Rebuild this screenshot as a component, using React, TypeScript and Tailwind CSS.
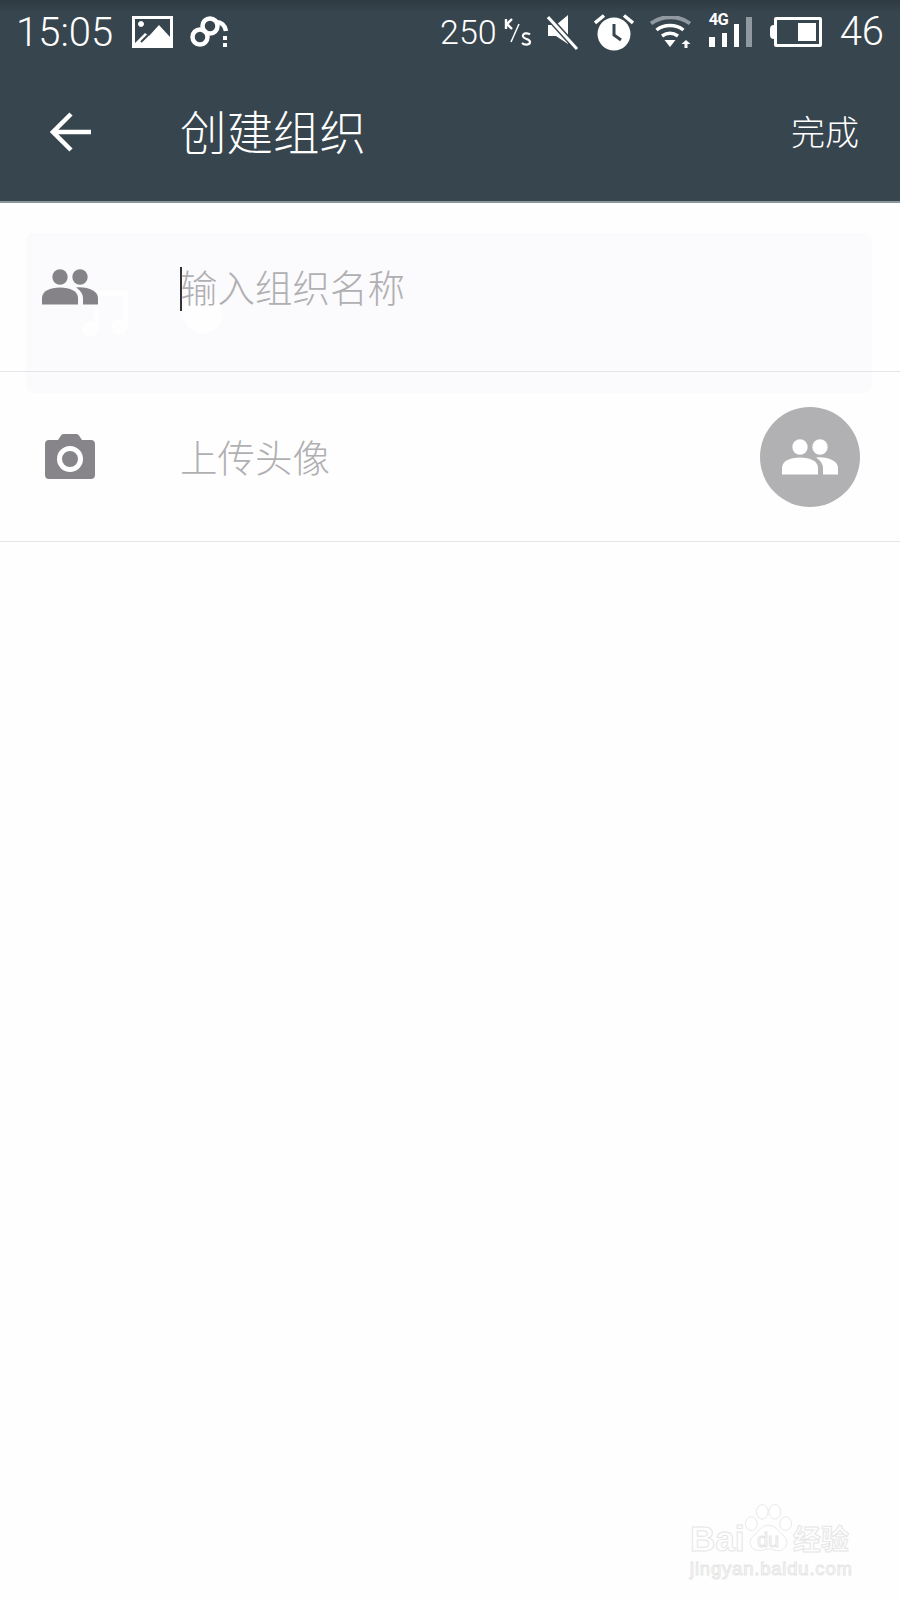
const cjk = "font-['Noto_Sans_CJK_SC','Noto_Sans',sans-serif]";

function People() {
  return (
    <svg width="56" height="36" viewBox="0 0 56 36" fill="currentColor">
      <circle cx="18" cy="8" r="7.7" />
      <circle cx="38" cy="8" r="7.7" />
      <path d="M0 35.5V29C0 22 8 18.5 18 18.5S36 22 36 29V35.5Z" />
      <path d="M34 18.5C46 17.5 56 22 56 29V35.5H41V29C41 25 38 21 34 18.5Z" />
    </svg>
  );
}

function Camera() {
  return (
    <svg width="50" height="46" viewBox="0 0 50 46">
      <path
        d="M4 6H13L16 1.5C16.500 0.800 17.300 0 18.500 0H31.500C32.700 0 33.500 0.800 34 1.500L37 6H46C48.500 6 50 7.500 50 10V41C50 43.500 48.500 45 46 45H4C1.500 45 0 43.500 0 41V10C0 7.500 1.500 6 4 6Z"
        fill="#878589"
      />
      <circle cx="25" cy="25" r="10.500" fill="none" stroke="#fff" strokeWidth="5" />
    </svg>
  );
}

function StatusIcons() {
  return (
    <div className="flex items-center">
      <span className="text-[34px] font-light font-['Roboto',sans-serif] text-white leading-none">250</span>
      <svg className="ml-[7px]" width="28" height="28" viewBox="0 0 28 28" fill="none" stroke="#fff">
        <path d="M2 1V11M8 1L3 6L8 11" strokeWidth="2.400" />
        <path d="M15 6L7 24" strokeWidth="1.500" />
        <path d="M26 16.500C24 14.500 18 15 19 18.500C20 21.500 26 20.500 26 24C26 27.500 20 27 18 25" strokeWidth="2.200" />
      </svg>
      <svg className="ml-[15px]" width="32" height="36" viewBox="0 0 32 36" fill="#fff">
        <path d="M1 11H9L21 1V30L9 22H1Z" />
        <path d="M1 3L30 35" stroke="#37454e" strokeWidth="6" />
        <path d="M1 3L30 35" stroke="#fff" strokeWidth="3" />
      </svg>
      <svg className="ml-[15px]" width="40" height="38" viewBox="0 0 40 38">
        <circle cx="20" cy="21" r="16.500" fill="#fff" />
        <path d="M20 11V22L27 27" stroke="#37454e" strokeWidth="3" fill="none" />
        <path d="M1 10L10 2.500M39 10L30 2.500" stroke="#fff" strokeWidth="3.500" />
      </svg>
      <svg className="ml-[16px]" width="42" height="32" viewBox="0 0 42 32" fill="none">
        <path d="M1 7.500C12 -1 29 -1 40 7.500" stroke="#8f999f" strokeWidth="4" />
        <path d="M6.500 14C14 8 26 8 33.500 14" stroke="#fff" strokeWidth="3.500" />
        <path d="M12 20C17 16.500 23 16.500 28 20" stroke="#fff" strokeWidth="3.500" />
        <path d="M14.500 24H25.500L20 31Z" fill="#fff" />
        <path d="M36 24L40.500 28H37.500V32H34.500V28H31.500Z" fill="#fff" />
      </svg>
      <div className="ml-[17px] relative w-[44px] h-[32px] flex items-end gap-[7px] mb-[2px]">
        <span className="absolute left-0 top-[-3px] text-[16.500px] leading-none font-bold font-['Roboto',sans-serif] text-white tracking-[-0.5px]">4G</span>
        <span className="w-[6px] h-[10px] bg-white" />
        <span className="w-[5px] h-[14px] bg-white" />
        <span className="w-[5px] h-[23px] bg-white" />
        <span className="w-[6px] h-[30px] bg-[#8f999f]" />
      </div>
      <div className="ml-[17px] flex items-center">
        <span className="w-[4px] h-[14px] bg-white rounded-l-sm" />
        <div className="w-[48px] h-[30px] border-[3px] border-white rounded-[2px] flex justify-end p-[3px]">
          <span className="w-[18px] bg-white" />
        </div>
      </div>
      <span className="ml-[18px] text-[40px] font-light font-['Roboto',sans-serif] text-white leading-none">46</span>
    </div>
  );
}

function Watermark() {
  return (
    <div className="absolute left-[688px] top-[1500px] w-[200px] h-[90px] font-['Liberation_Sans',sans-serif] text-transparent [-webkit-text-stroke:1px_#e6e6e6]">
      <span className="absolute left-[2px] top-[21px] text-[35px] font-bold leading-none">Bai</span>
      <svg className="absolute left-[57px] top-[3px]" width="47" height="52" viewBox="0 0 52 56" fill="#fff" stroke="#e6e6e6">
        <ellipse cx="7" cy="22" rx="6.500" ry="7.500" />
        <ellipse cx="19" cy="9" rx="6.500" ry="8" />
        <ellipse cx="33" cy="9" rx="6.500" ry="8" />
        <ellipse cx="45" cy="22" rx="6.500" ry="7.500" />
        <path d="M26 24C18 24 16 30 12 33C7 37 3 42 8 49C14 55 20 50 26 50C32 50 38 55 44 49C49 42 45 37 40 33C36 30 34 24 26 24Z" />
      </svg>
      <span className="absolute left-[69px] top-[30px] text-[20px] leading-none">du</span>
      <span className={`absolute left-[105px] top-[24px] text-[28px] leading-none font-bold ${cjk}`}>经验</span>
      <span className="absolute left-[2px] top-[60px] text-[18.500px] leading-none tracking-[0.800px]">jingyan.baidu.com</span>
    </div>
  );
}

export default function App() {
  return (
    <div className={`relative w-[900px] h-[1600px] overflow-hidden bg-[#fefefe] ${cjk}`}>
      {/* header */}
      <div className="h-[203px] bg-[#37454e] border-b-[2px] border-[#8c969b]">
        <div className="h-[62px] flex items-center justify-between pl-[16px] pr-[16px] pt-[2px] bg-gradient-to-b from-[#2e3b43] to-[#37454e] to-[12px]">
          <div className="flex items-center">
            <span className="text-[40px] font-light font-['Roboto',sans-serif] text-white leading-none pt-[2px]">15:05</span>
            <svg className="ml-[19px]" width="41" height="32" viewBox="0 0 41 32">
              <path fillRule="evenodd" fill="#fff" d="M0 0H41V32H0ZM3 3V27L13 17L17 20L27 9L38 21V3ZM9 5A3 3 0 1 0 9.010 5Z" />
              <path d="M9 26L16 19" stroke="#37454e" strokeWidth="2" />
            </svg>
            <svg className="ml-[17px]" width="40" height="32" viewBox="0 0 40 32" fill="none" stroke="#fff" strokeWidth="4.500">
              <circle cx="10" cy="21" r="7.500" />
              <circle cx="20" cy="10" r="7.500" />
              <path d="M26 6C31 6 35 9 36 15" />
              <path d="M35 20V24M35 27V31" strokeWidth="4" />
            </svg>
          </div>
          <StatusIcons />
        </div>
        <div className="h-[139px] flex items-center pl-[50px] pr-[41px]">
          <svg width="41" height="40" viewBox="0 0 41 40" fill="none" stroke="#fff" strokeWidth="4.500">
            <path d="M41 20H3M21 2L3 20L21 38" />
          </svg>
          <span className="ml-[89px] pb-[3px] text-[46.500px] leading-none text-white font-light">创建组织</span>
          <span className="ml-auto pb-[1px] text-[34px] leading-none text-white font-light">完成</span>
        </div>
      </div>

      {/* toast fading out behind the form */}
      <div className="absolute left-[26px] top-[233px] w-[846px] h-[160px] rounded-lg bg-[#fbfafc]">
        <svg className="absolute left-[54px] top-[52px] opacity-80" width="50" height="52" viewBox="0 0 50 52" fill="#fff">
          <path d="M14 6H48V42H43V11H19V44H14Z" />
          <circle cx="10" cy="44" r="8" />
          <circle cx="39" cy="42" r="8" />
        </svg>
        <div className="absolute left-[157px] top-[60px] w-[40px] h-[40px] rounded-full bg-white opacity-80" />
      </div>

      {/* form rows */}
      <div className="relative h-[169px] flex items-center border-b-[1.500px] border-[#e6e5e7]">
        <div className="w-[180px] pl-[42px] text-[#858387]">
          <People />
        </div>
        <span className="w-[1.500px] h-[44px] bg-[#333] mb-[-4px] mr-[-1.500px]" />
        <span className="pb-[2px] text-[37.500px] leading-none text-[#b0afb2] font-light">输入组织名称</span>
      </div>
      <div className="relative h-[170px] flex items-center border-b-[1.500px] border-[#e6e5e7]">
        <div className="w-[180px] pl-[45px]">
          <Camera />
        </div>
        <span className="pb-[2px] text-[37.500px] leading-none text-[#b0afb2] font-light">上传头像</span>
        <div className="ml-auto mr-[40px] w-[100px] h-[100px] rounded-full bg-[#b1b0b2] flex items-center justify-center text-white">
          <People />
        </div>
      </div>

      <Watermark />
    </div>
  );
}
